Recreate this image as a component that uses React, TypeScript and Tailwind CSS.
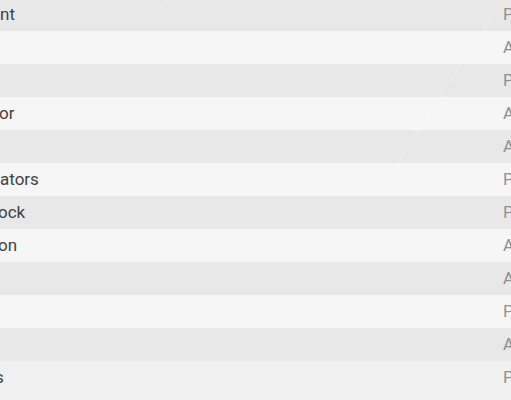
import React from 'react'

const rows = [
  { name: 'nt', tag: 'P', shift: 'ml-0' },
  { name: '', tag: 'A', shift: 'ml-0' },
  { name: '', tag: 'P', shift: 'ml-0' },
  { name: 'or', tag: 'A', shift: '-ml-[1px]' },
  { name: '', tag: 'A', shift: 'ml-0' },
  { name: 'ators', tag: 'P', shift: 'ml-0' },
  { name: 'ock', tag: 'P', shift: '-ml-[2px]' },
  { name: 'on', tag: 'A', shift: '-ml-[2px]' },
  { name: '', tag: 'A', shift: 'ml-0' },
  { name: '', tag: 'P', shift: 'ml-0' },
  { name: '', tag: 'A', shift: 'ml-0' },
  { name: 's', tag: 'P', shift: '-ml-[5px]' },
]

const bg = (i: number) => {
  if (i === rows.length - 1) return 'bg-[#f0f0f0]'
  return i % 2 === 0 ? 'bg-[#e8e8e8]' : 'bg-[#f6f6f6]'
}

export default function App() {
  return (
    <div className="relative w-[511px] h-[400px] overflow-hidden bg-[#f0f0f0] font-['Roboto',sans-serif]">
      <div className="-mt-[2px] flex flex-col">
        {rows.map((row, i) => (
          <div key={i} className={`flex items-center h-[33px] ${bg(i)}`}>
            <div className="flex-1 overflow-hidden">
              <span className={`block whitespace-nowrap text-[17px] leading-none text-[#424242] ${row.shift}`}>
                {row.name}
              </span>
            </div>
            <div className="w-[8px] shrink-0 overflow-visible whitespace-nowrap text-[17px] leading-none text-[#909090]">
              {row.tag}
            </div>
          </div>
        ))}
        <div className="h-[10px] bg-[#f0f0f0]" />
      </div>

      {/* faint diagonal streak in the background */}
      <svg className="absolute inset-0 pointer-events-none" width="511" height="400">
        <line x1="504" y1="-2" x2="380" y2="190" stroke="#ffffff" strokeOpacity="0.35" strokeWidth="1" />
        <line x1="175" y1="-4" x2="150" y2="12" stroke="#ffffff" strokeOpacity="0.25" strokeWidth="1" />
      </svg>
    </div>
  )
}
